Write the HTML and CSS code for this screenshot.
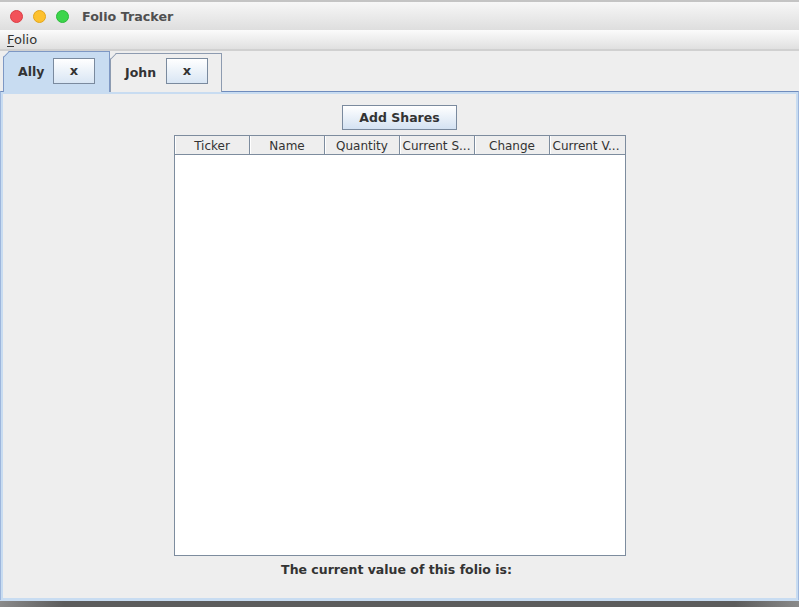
FILE: index.html
```html
<!DOCTYPE html>
<html>
<head>
<meta charset="utf-8">
<link rel="stylesheet" href="styles.css">
</head>
<body>
<div class="window">
  <div class="titlebar">
    <div class="lights">
      <span class="light red"></span>
      <span class="light yellow"></span>
      <span class="light green"></span>
    </div>
    <div class="title">Folio Tracker</div>
  </div>
  <div class="menubar"><span class="menu"><u>F</u>olio</span></div>
  <div class="tabs">
    <div class="tab selected">
      <span class="tab-label">Ally</span>
      <button class="close">x</button>
    </div>
    <div class="tab">
      <span class="tab-label">John</span>
      <button class="close">x</button>
    </div>
  </div>
  <div class="panel">
    <div class="panel-inner">
      <button class="add">Add Shares</button>
      <div class="table">
        <div class="thead">
          <div class="th">Ticker</div>
          <div class="th">Name</div>
          <div class="th">Quantity</div>
          <div class="th left">Current S...</div>
          <div class="th">Change</div>
          <div class="th left last">Current V...</div>
        </div>
        <div class="tbody"></div>
      </div>
      <div class="value">The current value of this folio is:</div>
    </div>
  </div>
  <div class="desktop"></div>
</div>
</body>
</html>
```

FILE: styles.css
```css
html, body {
  margin: 0;
  padding: 0;
  background: #eeeeee;
}
body {
  width: 799px;
  height: 607px;
  overflow: hidden;
  font-family: "DejaVu Sans", sans-serif;
  color: #333333;
}
.window {
  display: flex;
  flex-direction: column;
  width: 799px;
  height: 607px;
}
.titlebar {
  height: 30px;
  box-sizing: border-box;
  border-top: 2px solid #c4c4c4;
  background: linear-gradient(#f7f7f7, #dedede);
  display: flex;
  align-items: center;
}
.lights {
  display: flex;
  gap: 10px;
  margin-left: 10px;
  margin-top: 1px;
}
.light {
  width: 13px;
  height: 13px;
  border-radius: 50%;
  box-sizing: border-box;
}
.red { background: #f2525a; border: 1px solid #dc3d44; }
.yellow { background: #fdc12e; border: 1px solid #e2a51c; }
.green { background: #3bd54a; border: 1px solid #2bb93a; }
.title {
  margin-left: 13px;
  font-weight: bold;
  font-size: 12.7px;
  color: #505050;
  margin-top: 1px;
}
.menubar {
  height: 19px;
  background: linear-gradient(#fbfbfb, #e0e0e0);
  border-bottom: 2px solid #d0d0d0;
  display: flex;
  align-items: center;
}
.menu {
  margin-left: 7px;
  font-size: 13px;
  color: #333;
}
.menu u { text-decoration-thickness: 1px; text-underline-offset: 2px; }
.tabs {
  height: 41px;
  display: flex;
  align-items: flex-end;
  padding-left: 3px;
  position: relative;
  z-index: 1;
}
.tab {
  box-sizing: border-box;
  height: 39px;
  width: 112px;
  border: 1px solid #8d9bb0;
  border-bottom: none;
  background: #eeeeee;
  display: flex;
  align-items: center;
  clip-path: polygon(6px 0, 100% 0, 100% 100%, 0 100%, 0 6px);
  position: relative;
}
.tab::before {
  content: "";
  position: absolute;
  left: -1px;
  top: -1px;
  width: 8px;
  height: 1px;
  background: #8d9bb0;
  transform-origin: 0 0;
  transform: translate(0px, 6px) rotate(-45deg);
}
.tab.selected {
  width: 107px;
  height: 41px;
  border-color: #7e98c4;
  background: #c8dcf1;
}
.tab.selected::before { background: #7e98c4; }
.tab-label {
  font-weight: bold;
  font-size: 12.5px;
  color: #333;
  margin-left: 14px;
  width: 36px;
  margin-bottom: 2px;
}
.tab:not(.selected) .tab-label { margin-left: 14px; width: 41px; }
.tab.selected .tab-label { width: 35px; }
.close {
  width: 42px;
  height: 26px;
  box-sizing: border-box;
  border: 1px solid #7a8a9e;
  background: linear-gradient(#ffffff, #d9e6f4);
  font-family: "DejaVu Sans", sans-serif;
  font-weight: bold;
  font-size: 13px;
  color: #333;
  padding: 0 0 2px 0;
  margin: 0;
  margin-bottom: 2px;
}
.tab:not(.selected) .close { margin-bottom: 4px; }
.panel {
  flex: 1;
  box-sizing: border-box;
  border-top: 1px solid #6f8cbd;
  border-left: 1px solid #9db6dc;
  border-right: 1px solid #9db6dc;
  margin-top: -1px;
}
.panel-inner {
  height: 100%;
  box-sizing: border-box;
  border: 2px solid #c8dcf1;
  border-top-width: 2px;
  display: flex;
  flex-direction: column;
  align-items: center;
  padding-top: 11px;
}
.add {
  width: 115px;
  height: 25px;
  box-sizing: border-box;
  border: 1px solid #7a8a9e;
  background: linear-gradient(#ffffff, #d4e2f2);
  font-family: "DejaVu Sans", sans-serif;
  font-weight: bold;
  font-size: 12.5px;
  color: #333;
  padding: 0;
  margin: 0;
}
.table {
  margin-top: 5px;
  width: 452px;
  height: 421px;
  box-sizing: border-box;
  border: 1px solid #7d8c9e;
  background: #ffffff;
  display: flex;
  flex-direction: column;
}
.thead {
  display: flex;
  height: 19px;
  box-sizing: border-box;
  border-bottom: 1px solid #7d8c9e;
  background: #eeeeee;
}
.th {
  width: 75px;
  box-sizing: border-box;
  border-right: 1px solid #7d8c9e;
  border-left: 1px solid #ffffff;
  font-size: 12px;
  color: #333;
  text-align: center;
  line-height: 18px;
  padding-top: 1px;
  white-space: nowrap;
  overflow: hidden;
}
.th.left { text-align: left; padding-left: 2px; }
.th.last { border-right: none; }
.tbody { flex: 1; }
.value {
  margin-top: 6px;
  padding-right: 6px;
  font-weight: bold;
  font-size: 12.5px;
  color: #333;
}
.desktop {
  height: 6px;
  background: linear-gradient(90deg, #8a8a8a, #5c5c5c 8%, #5c5c5c 92%, #8a8a8a);
  border-top: 1px solid #c8dcf1;
}
```
